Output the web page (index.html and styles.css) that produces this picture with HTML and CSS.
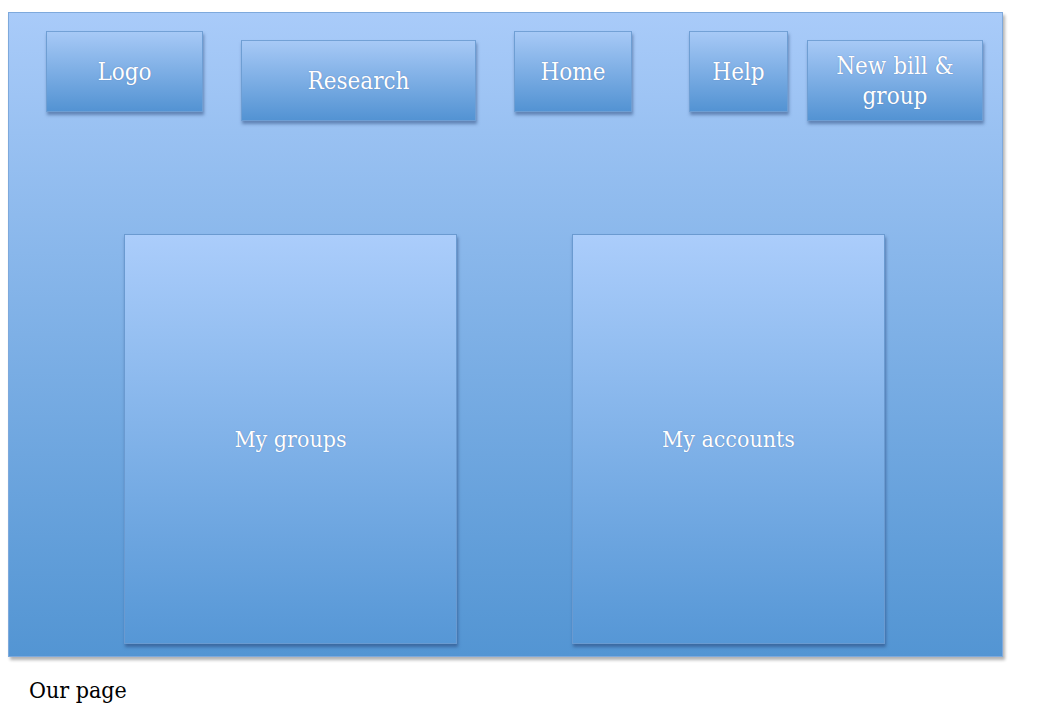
FILE: index.html
```html
<!DOCTYPE html>
<html lang="en">
<head>
  <meta charset="UTF-8">
  <title>Our page</title>
  <link rel="stylesheet" href="styles.css">
</head>
<body>
  <div class="board">
    <nav class="top-bar">
      <div class="tile tile-logo">Logo</div>
      <div class="tile tile-research low">Research</div>
      <div class="tile tile-home">Home</div>
      <div class="tile tile-help">Help</div>
      <div class="tile tile-new low">New bill &amp;<br>group</div>
    </nav>
    <div class="panels">
      <div class="panel panel-groups">My groups</div>
      <div class="panel panel-accounts">My accounts</div>
    </div>
  </div>
  <p class="caption">Our page</p>
</body>
</html>
```

FILE: styles.css
```css
/* page */
body {
  margin: 0;
  padding: 12px 0 0 8px;
  background: white;
  font-family: 'DejaVu Serif Condensed', 'DejaVu Serif', serif;
}

.board {
  width: 993px;
  height: 643px;
  border: 1px solid #7ea9dc;
  background: linear-gradient(to bottom, #a9cbf9, #5395d3);
  box-shadow: 2px 3px 3px rgba(0, 0, 0, 0.3);
  display: flex;
  flex-direction: column;
}

/* top buttons */
.top-bar {
  display: flex;
  align-items: flex-start;
  padding: 18px 0 0 37px;
}

.tile {
  height: 79px;
  border: 1px solid #6e9ed3;
  border-top-color: #73a1d6;
  background: linear-gradient(to bottom, #a7c9f6, #5393d3);
  box-shadow: 1px 3px 3px rgba(40, 70, 120, 0.5);
  color: white;
  font-size: 24px;
  line-height: 30px;
  text-align: center;
  display: flex;
  align-items: center;
  justify-content: center;
  text-shadow: 0 0 1px rgba(60, 90, 150, 0.7);
}

.tile.low {
  margin-top: 9px;
}

.tile-logo { width: 155px; }
.tile-research { width: 233px; margin-left: 38px; }
.tile-home { width: 116px; margin-left: 38px; }
.tile-help { width: 97px; margin-left: 57px; }
.tile-new { width: 174px; margin-left: 19px; }

/* big panels */
.panels {
  display: flex;
  padding: 113px 0 0 115px;
  gap: 115px;
}

.panel {
  height: 408px;
  border: 1px solid #6a9ad0;
  background: linear-gradient(to bottom, #abcdfb, #5697d6);
  box-shadow: 1px 3px 3px rgba(40, 70, 120, 0.55);
  color: white;
  font-size: 23px;
  display: flex;
  align-items: center;
  justify-content: center;
  text-shadow: 0 0 1px rgba(60, 90, 150, 0.7);
}

.panel-groups { width: 331px; }
.panel-accounts { width: 311px; }

.caption {
  margin: 20px 0 0 21px;
  font-size: 23px;
  color: black;
}
```
